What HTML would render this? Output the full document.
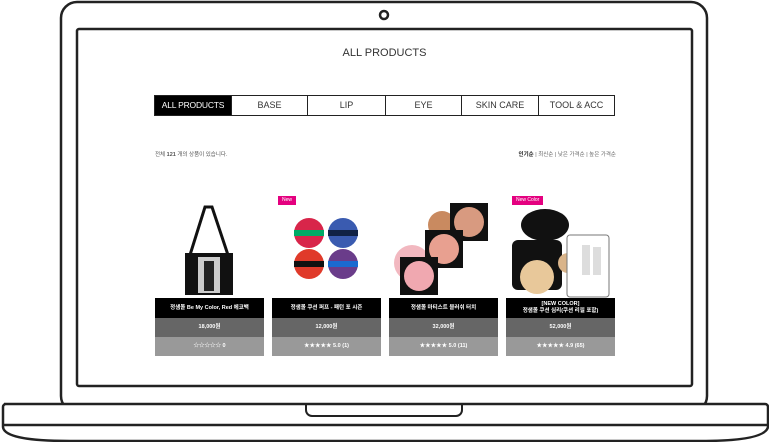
<!DOCTYPE html>
<html><head><meta charset="utf-8"><style>
*{margin:0;padding:0;box-sizing:border-box}
body{width:769px;height:442px;background:#fff;position:relative;overflow:hidden;font-family:"Liberation Sans","Noto Sans CJK KR",sans-serif}
.a{position:absolute}
.tab{position:absolute;top:95px;height:21px;border:1px solid #222;font-size:9px;color:#333;text-align:center;line-height:19px;background:#fff;white-space:nowrap;overflow:hidden}
.card{position:absolute;top:298px;width:109px;font-size:5.5px;text-align:center;font-weight:bold}
.card .n{background:#000;color:#fff;height:20px;display:flex;align-items:center;justify-content:center;line-height:7px}
.card .p{background:#666;color:#fff;height:19px;line-height:19px}
.card .r{background:#999;color:#fff;height:19px;line-height:19px}
.badge{position:absolute;top:196px;height:9px;background:#e4007f;color:#fff;font-size:5px;line-height:9px;padding:0 4px}
</style></head><body>
<svg class="a" style="left:0;top:0" width="769" height="442">
<rect x="61" y="2" width="646" height="410" rx="16" fill="#fff" stroke="#222" stroke-width="2.5"/>
<rect x="77" y="29" width="615" height="357" rx="2" fill="#fff" stroke="#222" stroke-width="2.5"/>
<circle cx="384" cy="15" r="4" fill="none" stroke="#222" stroke-width="2.5"/>
<path d="M4 404 H765 a3 3 0 0 1 3 3 V427 Q765 441 700 441 H70 Q4 441 3 427 V407 a3 3 0 0 1 3-3 Z" fill="#fff" stroke="#222" stroke-width="2.5"/>
<line x1="3" y1="425" x2="767" y2="425" stroke="#222" stroke-width="2.5"/>
<path d="M306 404 V410 a6 6 0 0 0 6 6 H456 a6 6 0 0 0 6-6 V404" fill="none" stroke="#222" stroke-width="2"/>
</svg>
<div class="a" style="left:0;top:47px;width:769px;text-align:center;font-size:11px;color:#333">ALL PRODUCTS</div>
<div class="tab" style="left:154px;width:78px;background:#000;color:#fff;font-size:8.5px;letter-spacing:-0.2px">ALL PRODUCTS</div>
<div class="tab" style="left:231px;width:77px">BASE</div>
<div class="tab" style="left:307px;width:79px">LIP</div>
<div class="tab" style="left:385px;width:77px">EYE</div>
<div class="tab" style="left:461px;width:78px">SKIN CARE</div>
<div class="tab" style="left:538px;width:77px">TOOL &amp; ACC</div>
<div class="a" style="left:155px;top:150px;font-size:5.5px;color:#555;white-space:nowrap">전체 <b>121</b> 개의 상품이 있습니다.</div>
<div class="a" style="left:500px;top:150px;width:116px;text-align:right;font-size:5.5px;color:#666;white-space:nowrap"><b style="color:#222">인기순</b> | 최신순 | 낮은 가격순 | 높은 가격순</div>
<div class="badge" style="left:278px">New</div>
<div class="badge" style="left:512px">New Color</div>
<svg class="a" style="left:150px;top:195px" width="470" height="103">
<path d="M40 60 L55 12 L62 12 L78 60" fill="none" stroke="#111" stroke-width="3"/>
<rect x="35" y="58" width="48" height="42" fill="#111"/>
<rect x="48" y="62" width="22" height="36" fill="#ccc"/><rect x="54" y="66" width="10" height="30" fill="#222"/>
<circle cx="159" cy="38" r="15" fill="#d8254a"/><rect x="144" y="35" width="30" height="6" fill="#0a6"/>
<circle cx="193" cy="38" r="15" fill="#3a5bb0"/><rect x="178" y="35" width="30" height="6" fill="#124"/>
<circle cx="159" cy="69" r="15" fill="#e03a2a"/><rect x="144" y="66" width="30" height="6" fill="#111"/>
<circle cx="193" cy="69" r="15" fill="#6a3c8a"/><rect x="178" y="66" width="30" height="6" fill="#1a6ad0"/>
<circle cx="262" cy="68" r="18" fill="#f2b8c0"/><circle cx="292" cy="30" r="14" fill="#c98a60"/>
<rect x="300" y="8" width="38" height="38" fill="#111"/><circle cx="319" cy="27" r="15" fill="#d89a80"/>
<rect x="275" y="35" width="38" height="38" fill="#111"/><circle cx="294" cy="54" r="15" fill="#e8a090"/>
<rect x="250" y="62" width="38" height="38" fill="#111"/><circle cx="269" cy="81" r="15" fill="#f0a8b0"/>
<ellipse cx="395" cy="30" rx="24" ry="16" fill="#111"/>
<rect x="362" y="45" width="50" height="50" rx="6" fill="#111"/><circle cx="387" cy="82" r="17" fill="#e8c89a"/>
<circle cx="418" cy="68" r="10" fill="#d9b48a"/>
<rect x="417" y="40" width="42" height="62" rx="3" fill="#fff" stroke="#777"/>
<rect x="432" y="50" width="8" height="30" fill="#ddd"/><rect x="443" y="52" width="8" height="28" fill="#ddd"/>
</svg>
<div class="card" style="left:155px"><div class="n">정샘물 Be My Color, Red 에코백</div><div class="p">18,000원</div><div class="r">☆☆☆☆☆ 0</div></div>
<div class="card" style="left:272px"><div class="n">정샘물 쿠션 퍼프 - 패턴 포 시즌</div><div class="p">12,000원</div><div class="r">★★★★★ 5.0 (1)</div></div>
<div class="card" style="left:389px"><div class="n">정샘물 마티스트 블러쉬 터치</div><div class="p">32,000원</div><div class="r">★★★★★ 5.0 (11)</div></div>
<div class="card" style="left:506px"><div class="n">[NEW COLOR]<br>정샘물 쿠션 심리(쿠션 리필 포함)</div><div class="p">52,000원</div><div class="r">★★★★★ 4.9 (65)</div></div>
</body></html>
